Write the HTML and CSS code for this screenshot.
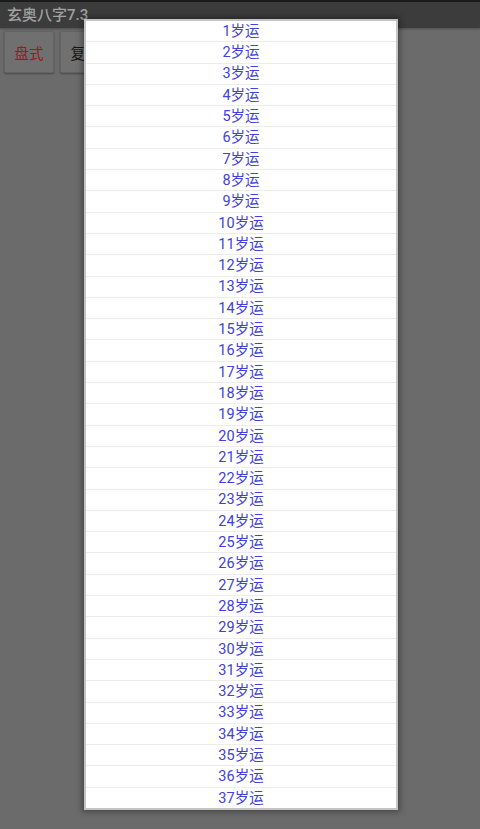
FILE: index.html
```html
<!DOCTYPE html>
<html lang="zh">
<head>
<meta charset="utf-8">
<title>玄奥八字7.3</title>
<link rel="stylesheet" href="styles.css">
</head>
<body>
<div class="app">
  <div class="statusline"></div>
  <header class="titlebar">玄奥八字7.3</header>
  <div class="toolbar">
    <button class="btn btn-red">盘式</button>
    <button class="btn">复盘</button>
  </div>
</div>
<div class="popup">
  <ul class="list">
    <li>1岁运</li><li>2岁运</li><li>3岁运</li><li>4岁运</li><li>5岁运</li>
    <li>6岁运</li><li>7岁运</li><li>8岁运</li><li>9岁运</li><li>10岁运</li>
    <li>11岁运</li><li>12岁运</li><li>13岁运</li><li>14岁运</li><li>15岁运</li>
    <li>16岁运</li><li>17岁运</li><li>18岁运</li><li>19岁运</li><li>20岁运</li>
    <li>21岁运</li><li>22岁运</li><li>23岁运</li><li>24岁运</li><li>25岁运</li>
    <li>26岁运</li><li>27岁运</li><li>28岁运</li><li>29岁运</li><li>30岁运</li>
    <li>31岁运</li><li>32岁运</li><li>33岁运</li><li>34岁运</li><li>35岁运</li>
    <li>36岁运</li><li>37岁运</li>
  </ul>
</div>
</body>
</html>
```
FILE: styles.css
```css
html, body {
  margin: 0;
  padding: 0;
  height: 100%;
}
body {
  background: #6b6b6b;
  font-family: Roboto, "Noto Sans CJK SC", sans-serif;
  position: relative;
  overflow: hidden;
}
.app {
  display: flex;
  flex-direction: column;
}
.statusline {
  height: 2px;
  background: #1c1c1c;
}
.titlebar {
  height: 26px;
  background: #3c3c3c;
  color: #a2a2a2;
  font-size: 15px;
  font-weight: 500;
  line-height: 26px;
  padding-left: 7px;
  box-shadow: 0 1px 2px rgba(0,0,0,0.3);
}
.toolbar {
  display: flex;
  gap: 6px;
  padding: 3px 4px;
}
.btn {
  width: 50px;
  height: 42px;
  margin: 0;
  padding: 0;
  border: 1px solid #636363;
  border-radius: 2px;
  background: #707070;
  box-shadow: 0 1px 2px rgba(0,0,0,0.35);
  font-family: Roboto, "Noto Sans CJK SC", sans-serif;
  font-size: 14.5px;
  color: #161616;
}
.btn-red {
  color: #a3141c;
}
.popup {
  position: absolute;
  left: 84px;
  top: 19px;
  width: 310px;
  height: 787px;
  border: 2px solid #c4c4c4;
  background: #ffffff;
  box-shadow: 0 0 6px 2px rgba(0,0,0,0.35);
}
.list {
  list-style: none;
  margin: 0;
  padding: 0;
  height: 100%;
  display: flex;
  flex-direction: column;
}
.list li {
  flex: 1 1 0;
  display: flex;
  align-items: center;
  justify-content: center;
  padding-top: 2px;
  border-bottom: 1px solid #ececec;
  color: #4040dc;
  font-size: 14.5px;
  line-height: 1;
}
.list li:last-child {
  border-bottom: none;
}
```
